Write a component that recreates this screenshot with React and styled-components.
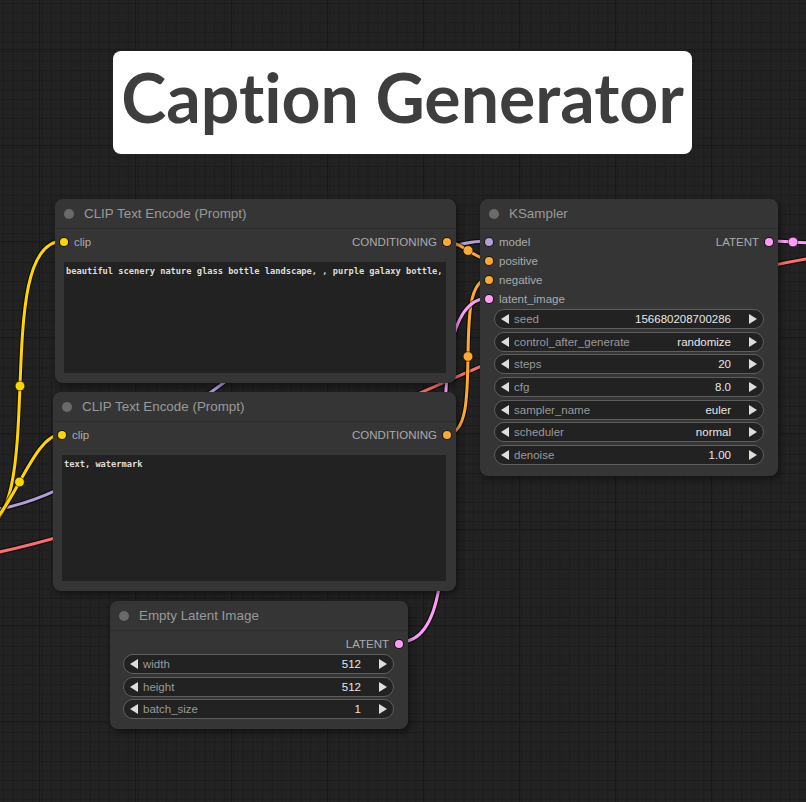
import styled, { createGlobalStyle } from 'styled-components';

const GlobalStyle = createGlobalStyle`
  html, body {
    margin: 0;
    padding: 0;
    background: #222;
  }
`;

const LINK = {
  CLIP: '#ffd500',
  CONDITIONING: '#ffa931',
  MODEL: '#b39ddb',
  LATENT: '#ff9cf9',
  VAE: '#ff6e6e',
};

const Canvas = styled.div`
  position: relative;
  width: 806px;
  height: 802px;
  overflow: hidden;
  background-color: #222;
  background-image:
    linear-gradient(#191919 1px, transparent 1px),
    linear-gradient(90deg, #191919 1px, transparent 1px),
    linear-gradient(#1c1c1c 1px, transparent 1px),
    linear-gradient(90deg, #1c1c1c 1px, transparent 1px);
  background-size: 96px 96px, 96px 96px, 9.6px 9.6px, 9.6px 9.6px;
  background-position: 0 49px, 39px 0, 0 3px, 3px 0;
  font-family: 'Liberation Sans', Arial, sans-serif;
`;

const Wires = styled.svg`
  position: absolute;
  left: 0;
  top: 0;
`;

const TitleCard = styled.div`
  position: absolute;
  left: 113px;
  top: 51px;
  width: 579px;
  height: 103px;
  box-sizing: border-box;
  padding-bottom: 12px;
  background: #fff;
  border-radius: 8px;
  display: flex;
  align-items: center;
  justify-content: center;
  white-space: nowrap;
  font-family: Lato, 'Noto Sans', sans-serif;
  font-weight: 700;
  font-size: 68px;
  font-variant-ligatures: none;
  font-feature-settings: 'liga' 0;
  color: #3e3e3e;
`;

const Node = styled.div`
  position: absolute;
  left: ${p => p.$x}px;
  top: ${p => p.$y}px;
  width: ${p => p.$w}px;
  height: ${p => p.$h}px;
  background: #353535;
  border-radius: 8px;
  box-shadow: 2px 3px 6px rgba(0, 0, 0, 0.45);
  display: flex;
  flex-direction: column;
  box-sizing: border-box;
`;

const TitleBar = styled.div`
  height: 29px;
  flex: none;
  display: flex;
  align-items: center;
  gap: 10px;
  padding-left: 9px;
  border-bottom: 1px solid #2d2d2d;
`;

const TitleDot = styled.span`
  width: 10px;
  height: 10px;
  border-radius: 50%;
  background: #6a6a6a;
`;

const TitleText = styled.span`
  font-size: 13.4px;
  color: #999;
`;

const Slots = styled.div`
  display: flex;
  justify-content: space-between;
  padding-top: 3px;
`;

const SlotColumn = styled.div`
  display: flex;
  flex-direction: column;
  align-items: ${p => (p.$out ? 'flex-end' : 'flex-start')};
`;

const Slot = styled.div`
  height: 19px;
  display: flex;
  align-items: center;
  gap: 6px;
  padding: 0 5px;
  font-size: 11.5px;
  color: #aaa;
`;

const SlotDot = styled.span`
  width: 8px;
  height: 8px;
  border-radius: 50%;
  background: ${p => p.$color};
  box-shadow: 0 0 0 1px rgba(0, 0, 0, 0.55);
`;

const PromptBox = styled.div`
  flex: 1;
  margin: 11px 10px 10px 9px;
  background: #222;
  padding: 4px 2px;
  font-family: 'DejaVu Sans Mono', 'Liberation Mono', monospace;
  font-weight: 700;
  font-size: 8.7px;
  color: #ddd;
  white-space: pre;
  overflow: hidden;
`;

const Widgets = styled.div`
  display: flex;
  flex-direction: column;
  gap: 2.67px;
  margin: 1px 14px 0 ${p => p.$left || 14}px;
`;

const Widget = styled.div`
  height: 20px;
  box-sizing: border-box;
  border: 1px solid #5e5e5e;
  border-radius: 10px;
  background: #222;
  display: flex;
  align-items: center;
  padding: 0 6px;
  font-size: 11.5px;
`;

const Arrow = styled.span`
  width: 0;
  height: 0;
  border-top: 5px solid transparent;
  border-bottom: 5px solid transparent;
  ${p => (p.$right ? 'border-left' : 'border-right')}: 8.5px solid #ddd;
`;

const WidgetLabel = styled.span`
  flex: 1;
  margin-left: 5px;
  color: #999;
`;

const WidgetValue = styled.span`
  margin-right: 18px;
  color: #e6e6e6;
`;

function Link({ d, color }) {
  return (
    <g fill="none" strokeLinecap="round">
      <path d={d} stroke="rgba(0,0,0,0.55)" strokeWidth="5.5" />
      <path d={d} stroke={color} strokeWidth="3" />
    </g>
  );
}

function MidDot({ x, y, color }) {
  return <circle cx={x} cy={y} r="4.8" fill={color} stroke="rgba(0,0,0,0.5)" strokeWidth="1" />;
}

function NodeTitle({ children }) {
  return (
    <TitleBar>
      <TitleDot />
      <TitleText>{children}</TitleText>
    </TitleBar>
  );
}

function Input({ name, type }) {
  return (
    <Slot>
      <SlotDot $color={LINK[type]} />
      {name}
    </Slot>
  );
}

function Output({ name, type }) {
  return (
    <Slot>
      {name}
      <SlotDot $color={LINK[type]} />
    </Slot>
  );
}

function NumberWidget({ label, value }) {
  return (
    <Widget>
      <Arrow />
      <WidgetLabel>{label}</WidgetLabel>
      <WidgetValue>{value}</WidgetValue>
      <Arrow $right />
    </Widget>
  );
}

function ClipNode({ x, y, w, h, text }) {
  return (
    <Node $x={x} $y={y} $w={w} $h={h}>
      <NodeTitle>CLIP Text Encode (Prompt)</NodeTitle>
      <Slots>
        <SlotColumn>
          <Input name="clip" type="CLIP" />
        </SlotColumn>
        <SlotColumn $out>
          <Output name="CONDITIONING" type="CONDITIONING" />
        </SlotColumn>
      </Slots>
      <PromptBox>{text}</PromptBox>
    </Node>
  );
}

const samplerWidgets = [
  ['seed', '156680208700286'],
  ['control_after_generate', 'randomize'],
  ['steps', '20'],
  ['cfg', '8.0'],
  ['sampler_name', 'euler'],
  ['scheduler', 'normal'],
  ['denoise', '1.00'],
];

const latentWidgets = [
  ['width', '512'],
  ['height', '512'],
  ['batch_size', '1'],
];

export default function App() {
  return (
    <>
      <GlobalStyle />
      <Canvas>
        <Wires width="806" height="802" viewBox="0 0 806 802">
          <Link d="M -20 556 C 250 504.5 556 293 826 256" color={LINK.VAE} />
          <Link d="M -23 511 C 122 511 344 241 489 241" color={LINK.MODEL} />
          <Link d="M -23 530 C 52 530 -12 241 63 241" color={LINK.CLIP} />
          <Link d="M -23 530 C 9 530 30 434 62 434" color={LINK.CLIP} />
          <Link d="M 447 241 C 458.5 241 477.5 260 489 260" color={LINK.CONDITIONING} />
          <Link d="M 447 434 C 487 434 449 279 489 279" color={LINK.CONDITIONING} />
          <Link d="M 400 642 C 489 642 400 298 489 298" color={LINK.LATENT} />
          <Link d="M 770 241 C 781.5 241 804.5 243 816 243" color={LINK.LATENT} />
          <MidDot x={20} y={386} color={LINK.CLIP} />
          <MidDot x={19.5} y={482} color={LINK.CLIP} />
          <MidDot x={468} y={250.5} color={LINK.CONDITIONING} />
          <MidDot x={468} y={356.5} color={LINK.CONDITIONING} />
          <MidDot x={793} y={242} color={LINK.LATENT} />
        </Wires>

        <TitleCard>Caption Generator</TitleCard>

        <ClipNode
          x={55}
          y={199}
          w={401}
          h={184}
          text="beautiful scenery nature glass bottle landscape, , purple galaxy bottle,"
        />
        <ClipNode x={53} y={392} w={403} h={199} text="text, watermark" />

        <Node $x={480} $y={199} $w={298} $h={277}>
          <NodeTitle>KSampler</NodeTitle>
          <Slots>
            <SlotColumn>
              <Input name="model" type="MODEL" />
              <Input name="positive" type="CONDITIONING" />
              <Input name="negative" type="CONDITIONING" />
              <Input name="latent_image" type="LATENT" />
            </SlotColumn>
            <SlotColumn $out>
              <Output name="LATENT" type="LATENT" />
            </SlotColumn>
          </Slots>
          <Widgets>
            {samplerWidgets.map(([label, value]) => (
              <NumberWidget key={label} label={label} value={value} />
            ))}
          </Widgets>
        </Node>

        <Node $x={110} $y={601} $w={298} $h={128}>
          <NodeTitle>Empty Latent Image</NodeTitle>
          <Slots>
            <SlotColumn />
            <SlotColumn $out>
              <Output name="LATENT" type="LATENT" />
            </SlotColumn>
          </Slots>
          <Widgets $left={13}>
            {latentWidgets.map(([label, value]) => (
              <NumberWidget key={label} label={label} value={value} />
            ))}
          </Widgets>
        </Node>
      </Canvas>
    </>
  );
}
